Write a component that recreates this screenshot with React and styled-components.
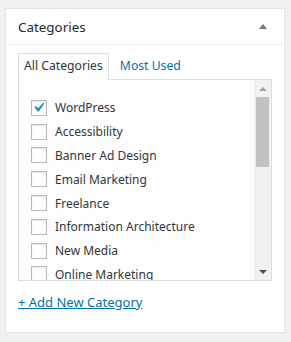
import React from "react"
import styled, { createGlobalStyle } from "styled-components"

const GlobalStyle = createGlobalStyle`
  html, body {
    margin: 0;
    padding: 0;
    background: #f1f1f1;
  }
  body {
    font-family: "Noto Sans", "Open Sans", sans-serif;
    font-size: 12px;
    color: #444;
  }
`

const Page = styled.div`
  padding: 8px 6px 0 5px;
`

const Postbox = styled.div`
  width: 280px;
  box-sizing: border-box;
  background: #fff;
  border: 1px solid #e5e5e5;
  box-shadow: 0 1px 1px rgba(0, 0, 0, 0.04);
`

const Header = styled.div`
  display: flex;
  align-items: center;
  justify-content: space-between;
  height: 35px;
  padding: 0 12px;
  border-bottom: 1px solid #eee;
`

const Title = styled.h2`
  margin: 0;
  font-size: 13.4px;
  font-weight: 400;
  color: #23282d;
  line-height: 20px;
`

const Toggle = styled.span`
  width: 0;
  height: 0;
  margin-right: 5px;
  border-left: 4px solid transparent;
  border-right: 4px solid transparent;
  border-bottom: 5px solid #72777c;
`

const Inside = styled.div`
  padding: 8px 12px 0;
  height: 287px;
  box-sizing: border-box;
`

const Tabs = styled.div`
  display: flex;
  align-items: flex-end;
`

const Tab = styled.div`
  padding: 3px 5px 5px;
  line-height: 18px;
  font-size: 12.2px;
  margin-right: 5px;
  border: 1px solid ${(p) => (p.$active ? "#ddd" : "transparent")};
  border-bottom: none;
  background: ${(p) => (p.$active ? "#fdfdfd" : "transparent")};
  color: ${(p) => (p.$active ? "#32373c" : "#0073aa")};
  margin-bottom: -1px;
  position: relative;
  z-index: 1;
`

const Panel = styled.div`
  display: flex;
  height: 200px;
  border: 1px solid #ddd;
  background: #fdfdfd;
`

const List = styled.ul`
  flex: 1;
  list-style: none;
  margin: 0;
  padding: 16px 0 0 12px;
  overflow: hidden;
`

const Item = styled.li`
  display: flex;
  align-items: center;
  height: 23.8px;
  color: #32373c;
  white-space: nowrap;
`

const Box = styled.span`
  display: inline-flex;
  align-items: center;
  justify-content: center;
  flex: none;
  width: 16px;
  height: 16px;
  box-sizing: border-box;
  margin-right: 8px;
  border: 1px solid #b4b9be;
  background: #fff;
  box-shadow: inset 0 1px 2px rgba(0, 0, 0, 0.1);
`

const Scrollbar = styled.div`
  width: 17px;
  flex: none;
  display: flex;
  flex-direction: column;
  align-items: center;
  background: #f1f1f1;
`

const Arrow = styled.span`
  width: 0;
  height: 0;
  border-left: 4px solid transparent;
  border-right: 4px solid transparent;
  ${(p) =>
    p.$down
      ? "border-top: 4px solid #505050; margin-top: auto; margin-bottom: 6px;"
      : "border-bottom: 4px solid #a3a3a3; margin-top: 7px;"}
`

const Thumb = styled.div`
  width: 13px;
  height: 70px;
  margin-top: 6px;
  background: #c1c1c1;
`

const AddLink = styled.a`
  display: inline-block;
  margin-top: 12px;
  color: #0073aa;
  text-decoration: underline;
  line-height: 18px;
  font-size: 13px;
`

const categories = [
  { name: "WordPress", checked: true },
  { name: "Accessibility" },
  { name: "Banner Ad Design" },
  { name: "Email Marketing" },
  { name: "Freelance" },
  { name: "Information Architecture" },
  { name: "New Media" },
  { name: "Online Marketing" },
]

function Check() {
  return (
    <svg width="21" height="21" viewBox="0 0 20 20" style={{ margin: "-3px -2px -2px -3px" }}>
      <path d="M14.83 4.89l1.34.94-5.81 8.38H9.02L5.78 9.67l1.34-1.25 2.57 2.4z" fill="#1e8cbe" />
    </svg>
  )
}

export default function App() {
  return (
    <Page>
      <GlobalStyle />
      <Postbox>
        <Header>
          <Title>Categories</Title>
          <Toggle />
        </Header>
        <Inside>
          <Tabs>
            <Tab $active>All Categories</Tab>
            <Tab>Most Used</Tab>
          </Tabs>
          <Panel>
            <List>
              {categories.map((c) => (
                <Item key={c.name}>
                  <Box>{c.checked && <Check />}</Box>
                  {c.name}
                </Item>
              ))}
            </List>
            <Scrollbar>
              <Arrow />
              <Thumb />
              <Arrow $down />
            </Scrollbar>
          </Panel>
          <AddLink href="#">+ Add New Category</AddLink>
        </Inside>
      </Postbox>
    </Page>
  )
}
